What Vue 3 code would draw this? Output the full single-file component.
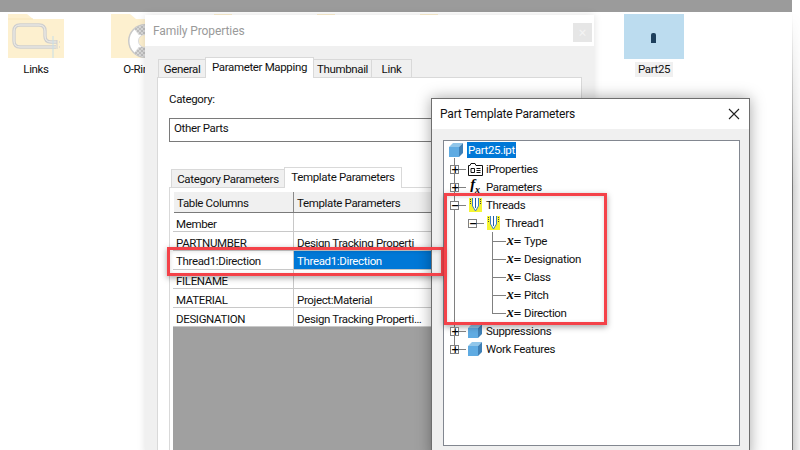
<script setup>
const gridRows = [
  { a: 'Member', b: '' },
  { a: 'PARTNUMBER', b: 'Design Tracking Properti' },
  { a: 'Thread1:Direction', b: 'Thread1:Direction', sel: true },
  { a: 'FILENAME', b: '' },
  { a: 'MATERIAL', b: 'Project:Material' },
  { a: 'DESIGNATION', b: 'Design Tracking Properti…' },
]
const tree = [
  { t: 'Part25.ipt', d: 0, icon: 'cube', sel: true },
  { t: 'iProperties', d: 0, box: '+', icon: 'props' },
  { t: 'Parameters', d: 0, box: '+', icon: 'fx' },
  { t: 'Threads', d: 0, box: '−', icon: 'thread' },
  { t: 'Thread1', d: 1, box: '−', icon: 'thread' },
  { t: 'Type', d: 2, icon: 'x' },
  { t: 'Designation', d: 2, icon: 'x' },
  { t: 'Class', d: 2, icon: 'x' },
  { t: 'Pitch', d: 2, icon: 'x' },
  { t: 'Direction', d: 2, icon: 'x' },
  { t: 'Suppressions', d: 0, box: '+', icon: 'cube' },
  { t: 'Work Features', d: 0, box: '+', icon: 'cube' },
]
</script>

<template>
  <div class="desk">
    <div class="topbar"></div>
    <div class="edge"></div>

    <div class="file links">
      <svg width="56" height="44" viewBox="0 0 56 44">
        <path d="M0 0H19L25 5H56V44H0Z" fill="#fdf0cf" />
        <path d="M0 5H25" stroke="#f8e6bb" fill="none" />
        <g fill="none">
          <path d="M48 33H12Q6 33 6 27V17Q6 11 12 11H31Q37 11 37 17V22Q37 28 43 28H49" stroke="#cfcfcf" stroke-width="3.4" />
          <path d="M48 33H12Q6 33 6 27V17Q6 11 12 11H31Q37 11 37 17V22Q37 28 43 28H49" stroke="#f3f1ea" stroke-width="1" />
          <path d="M45 22V44" stroke="#c6dfe8" />
          <path d="M49 26V35M51 28H52M51 33H52" stroke="#cfcfcf" />
        </g>
      </svg>
      <span>Links</span>
    </div>
    <div class="file oring">
      <svg width="56" height="44" viewBox="0 0 56 44">
        <defs>
          <pattern id="chk" width="4" height="4" patternUnits="userSpaceOnUse">
            <rect width="4" height="4" fill="#bdbdbd" />
            <rect width="2" height="2" fill="#d8d8d8" />
            <rect x="2" y="2" width="2" height="2" fill="#d8d8d8" />
          </pattern>
        </defs>
        <path d="M0 0H19L25 5H56V44H0Z" fill="#fdf0cf" />
        <circle cx="34" cy="27" r="17" fill="#c9c9c9" />
        <circle cx="34" cy="27" r="15.5" fill="#fff" />
        <path d="M23 15A15.5 15.5 0 0 1 34 11.5V21H28Z" fill="url(#chk)" />
        <path d="M23 39A15.5 15.5 0 0 0 34 42.5V33H28Z" fill="url(#chk)" />
        <circle cx="34" cy="27" r="6.5" fill="#fdf0cf" stroke="#dcdcdc" />
      </svg>
      <span>O-Ring</span>
    </div>
    <div class="peek p1"></div>
    <div class="peek p2"></div>
    <div class="peek p3"></div>
    <div class="file part">
      <div class="thumb"><i></i></div>
      <span>Part25</span>
    </div>

    <section class="family">
      <header class="ftitle">
        <span>Family Properties</span>
        <b class="fclose">×</b>
      </header>
      <div class="fbody">
        <nav class="tabs">
          <span class="tab t-gen">General</span>
          <span class="tab on t-map">Parameter Mapping</span>
          <span class="tab t-thu">Thumbnail</span>
          <span class="tab t-lnk">Link</span>
        </nav>
        <div class="pane">
          <div class="cat-label">Category:</div>
          <div class="cat-box">Other Parts</div>
          <nav class="tabs inner">
            <span class="tab t-cat">Category Parameters</span>
            <span class="tab on t-tpl">Template Parameters</span>
          </nav>
          <div class="inner-pane">
            <div class="ghead"><span>Table Columns</span><span>Template Parameters</span></div>
            <div v-for="r in gridRows" :key="r.a" class="grow" :class="{ s: r.sel }">
              <span>{{ r.a }}</span><span class="c2">{{ r.b }}</span>
            </div>
            <div class="gempty"></div>
          </div>
        </div>
      </div>
    </section>

    <section class="ptp">
      <header class="ptitle">
        <span>Part Template Parameters</span>
        <svg width="12" height="12" viewBox="0 0 12 12"><path d="M1 1L11 11M11 1L1 11" stroke="#222" stroke-width="1.1" /></svg>
      </header>
      <div class="pbody">
        <div class="treebox">
          <div class="vline v0"></div>
          <div class="vline v1"></div>
          <div v-for="(n, i) in tree" :key="n.t" class="node" :class="['d' + n.d, { root: i === 0 }]">
            <span v-if="n.box" class="exp">{{ n.box }}</span>
            <span v-else-if="n.d === 2" class="tick"></span>
            <span class="ic">
              <svg v-if="n.icon === 'cube'" width="16" height="16" viewBox="0 0 16 16">
                <path d="M1 5L5 1H15L11 5Z" fill="#90c6ea" />
                <path d="M1 5H11V15H1Z" fill="#5fabe2" />
                <path d="M11 5L15 1V11L11 15Z" fill="#3f80b6" />
              </svg>
              <svg v-else-if="n.icon === 'props'" width="15" height="13" viewBox="0 0 15 13">
                <path d="M.5 12.5V2.500H2L3 .5H7L8 2.500H14.500V12.500Z" fill="#fff" stroke="#111" />
                <path d="M3 5.500H6.500V9.500H3ZM8.500 5.500H12.500M8.500 7.500H12.500M8.500 9.500H12.500" fill="none" stroke="#111" />
              </svg>
              <svg v-else-if="n.icon === 'thread'" width="13" height="14" viewBox="0 0 13 14">
                <rect width="13" height="14" fill="#f5f532" />
                <path d="M3.500 0V8L6.500 13L9.500 8V0" fill="#fff" stroke="#3a7fc4" />
                <path d="M6.500 0V10" stroke="#1e5fa8" />
                <path d="M1.500 1V6M11.500 1V6" stroke="#444" stroke-dasharray="1 1" />
              </svg>
              <em v-else-if="n.icon === 'fx'" class="fx">f<sub>x</sub></em>
              <em v-else class="xeq">x<small>=</small></em>
            </span>
            <span class="lbl" :class="{ sel: n.sel }">{{ n.t }}</span>
          </div>
        </div>
      </div>
    </section>

    <div class="mark m1"></div>
    <div class="mark m2"></div>
  </div>
</template>

<style>
html, body { margin: 0; background: #fff; }
</style>

<style scoped>
.desk { position: relative; width: 800px; height: 450px; overflow: hidden; background: #fff; font: 11.5px "Roboto", sans-serif; letter-spacing: -.35px; color: #111; }
.topbar { height: 12px; width: 792px; background: #9b9b9b; }
.edge { position: absolute; left: 792px; top: 12px; width: 8px; height: 438px; box-sizing: border-box; border-left: 1px solid #777; background: linear-gradient(90deg, #d2d2d2, #f2f2f2); -webkit-mask-image: linear-gradient(180deg, transparent 0, #000 40%); mask-image: linear-gradient(180deg, transparent 0, #000 40%); }
.file { position: absolute; top: 14px; display: flex; flex-direction: column; align-items: center; }
.file span { margin-top: 3px; line-height: 16px; white-space: nowrap; }
.links { left: 8px; width: 56px; }
.oring { left: 111px; width: 56px; }
.peek { position: absolute; top: 14px; width: 18px; height: 2px; background: #fdf0cf; }
.p1 { left: 214px; } .p2 { left: 317px; } .p3 { left: 420px; }
.part { left: 624px; width: 60px; }
.thumb { width: 60px; height: 45px; background: #bcdcef; display: flex; align-items: center; justify-content: center; }
.thumb i { width: 5px; height: 10px; background: #1d3f5c; border-radius: 2px 2px 0 0; margin: 3px 2px 0 0; }
.part span { background: #f0f0f0; padding: 0 3px; margin-top: 3px; line-height: 15px; }

.family { position: absolute; left: 145px; top: 15px; width: 449px; height: 440px; background: #fff; box-shadow: 0 0 8px rgba(0,0,0,.12); display: flex; flex-direction: column; }
.ftitle { height: 31px; flex: none; display: flex; align-items: center; justify-content: space-between; padding: 0 2px 0 8px; color: #9a9a9a; font-size: 12px; letter-spacing: -.1px; }
.fclose { width: 19px; height: 19px; margin-top: 3px; background: #e6e6e6; color: #f4f4f4; text-align: center; font: 14px/19px "Noto Sans", sans-serif; }
.fbody { flex: 1; background: #f0f0f0; padding: 11px 12px 0; }
.tabs { display: flex; align-items: flex-end; height: 20px; position: relative; z-index: 1; margin-left: 1px; }
.tab { height: 18px; box-sizing: border-box; border: 1px solid #d9d9d9; border-bottom: 0; background: #f0f0f0; line-height: 19px; text-align: center; white-space: nowrap; }
.tab + .tab { margin-left: -1px; }
.tab.on { height: 21px; background: #fff; line-height: 18px; margin-bottom: -1px; position: relative; z-index: 1; }
.t-gen { width: 48px; } .t-map { width: 109px; } .t-thu { width: 59px; } .t-lnk { width: 41px; }
.pane { height: 400px; background: #fff; border: 1px solid #d9d9d9; padding: 13px 11px 0; box-sizing: border-box; width: 425px; }
.cat-label { line-height: 16px; }
.cat-box { margin-top: 11px; height: 24px; box-sizing: border-box; width: 395px; border: 1px solid #7a7a7a; padding-left: 4px; line-height: 19px; }
.tabs.inner { margin: 25px 0 0 2px; }
.t-cat { width: 114px; } .t-tpl { width: 118px; }
.inner-pane { border: 1px solid #d9d9d9; padding: 4px 2px 0 3px; height: 300px; width: 400px; box-sizing: border-box; }
.ghead { display: flex; height: 21px; background: #f0f0f0; border-bottom: 1px solid #7a7a7a; box-sizing: border-box; margin-left: 1px; }
.ghead span { width: 120px; padding-left: 3px; line-height: 23px; height: 20px; box-sizing: border-box; border-right: 1px solid #8a8a8a; }
.ghead span + span { width: 200px; border: 0; padding-left: 3px; }
.grow { display: flex; height: 19px; box-sizing: border-box; border-bottom: 1px solid #c8c8c8; background: #fff; line-height: 22px; }
.grow span { width: 121px; height: 18px; padding-left: 3px; box-sizing: border-box; border-right: 1px solid #c8c8c8; flex: none; white-space: nowrap; overflow: hidden; }
.grow .c2 { width: 200px; border: 0; padding-left: 3px; }
.grow.s span { line-height: 21px; }
.grow.s .c2 { background: #0078d7; color: #fff; }
.gempty { height: 140px; background: #a0a0a0; }

.ptp { position: absolute; left: 431px; top: 98px; width: 319px; height: 360px; box-sizing: border-box; border: 1px solid #6e6e6e; background: #fff; box-shadow: 0 0 14px rgba(0,0,0,.35); display: flex; flex-direction: column; }
.ptitle { height: 30px; flex: none; display: flex; align-items: center; justify-content: space-between; padding: 0 9px 0 8px; font-size: 12px; letter-spacing: -.2px; }
.pbody { flex: 1; background: #f0f0f0; padding: 11px 9px 0 11px; }
.treebox { position: relative; height: 306px; box-sizing: border-box; width: 297px; border: 1px solid #828790; background: #fff; padding-top: 1px; }
.node { display: flex; align-items: center; height: 18px; position: relative; padding-left: 6px; }
.node.root { padding-left: 4px; margin: -1px 0 1px; }
.node.d1 { padding-left: 24px; }
.node.d2 { padding-left: 62px; }
.exp { position: relative; width: 9px; height: 9px; box-sizing: border-box; border: 1px solid #808080; background: #fff; font: bold 10px/7px "DejaVu Sans", sans-serif; text-align: center; margin-right: 8px; flex: none; color: #000; z-index: 1; }
.exp::after { content: ""; position: absolute; left: 8px; top: 3px; width: 7px; height: 1px; background: #808080; }
.tick { position: absolute; left: 48px; top: 9px; width: 14px; height: 1px; background: #808080; }
.ic { width: 16px; height: 16px; flex: none; display: flex; align-items: center; justify-content: center; margin-right: 2px; }
.root .ic { margin-right: 3px; }
.d1 .ic { margin-right: 3px; }
.d2 .ic { margin-right: 1px; }
.lbl { padding: 0 1px; line-height: 16px; white-space: nowrap; }
.lbl.sel { background: #0078d7; color: #fff; }
.fx { font: italic bold 15px/16px "Liberation Serif", serif; color: #000; }
.fx sub { font-size: 10px; }
.xeq { font: italic bold 14px/16px "Liberation Serif", serif; color: #111; white-space: nowrap; }
.xeq small { font: 10px "DejaVu Sans", sans-serif; }
.vline { position: absolute; width: 1px; background: #808080; }
.v0 { left: 10px; top: 17px; height: 191px; }
.v1 { left: 48px; top: 91px; height: 81px; }

.mark { position: absolute; box-sizing: border-box; border: 3px solid #f44249; box-shadow: 0 2px 6px rgba(0,0,0,.35), inset 0 1px 4px rgba(0,0,0,.15); }
.m1 { left: 167px; top: 247px; width: 277px; height: 29px; }
.m2 { left: 444px; top: 193px; width: 163px; height: 132px; }
</style>
